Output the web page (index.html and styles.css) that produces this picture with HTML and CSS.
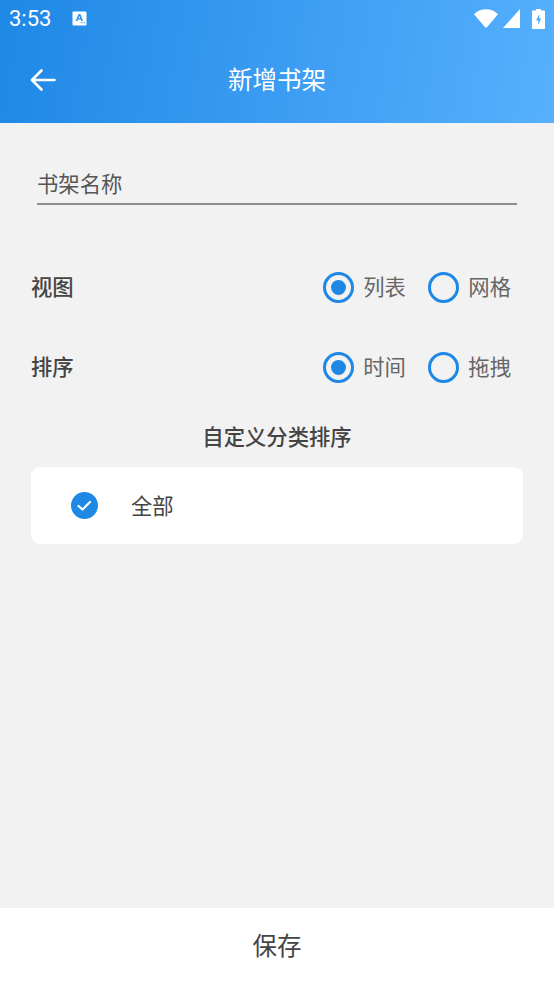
FILE: index.html
```html
<!DOCTYPE html>
<html lang="zh">
<head>
<meta charset="utf-8">
<title>新增书架</title>
<link rel="stylesheet" href="styles.css">
</head>
<body>
<div class="app">
  <header class="header">
    <div class="status">
      <span class="time">3:53</span>
      <svg class="notif" width="15" height="15" viewBox="0 0 15 15"><path fill="#fff" fill-rule="evenodd" d="M1.500 0.500h12a1 1 0 0 1 1 1v12a1 1 0 0 1-1 1h-12a1 1 0 0 1-1-1v-12a1 1 0 0 1 1-1zM6.600 3 3.800 10h1.600l.5-1.400h3l.5 1.400h1.600L8.300 3zM7.400 4.900l1 2.400H6.500zM9 11.200h.9v1H9zM10.500 11.200h.9v1h-.9zM12 11.200h.9v1H12z"/></svg>
      <div class="status-right">
        <svg width="24" height="19" viewBox="0 0 24 19"><path fill="#fff" d="M0 5.200C3.200 2.100 7.300.3 12 .3s8.800 1.800 12 4.900L13.100 18a1.500 1.500 0 0 1-2.200 0z"/></svg>
        <svg class="signal" width="17" height="19" viewBox="0 0 17 19"><path fill="#fff" d="M17 0v19H0z"/></svg>
        <svg class="batt" width="13" height="20" viewBox="0 0 13 20"><path fill="#fff" fill-rule="evenodd" d="M4 0h5v1.500h3a1 1 0 0 1 1 1V19a1 1 0 0 1-1 1H1a1 1 0 0 1-1-1V2.500a1 1 0 0 1 1-1h3zM7.300 5 4 11.500h2.200V16l3-6.500H7.300z"/></svg>
      </div>
    </div>
    <div class="toolbar">
      <svg class="back" width="26" height="24" viewBox="0 0 26 24"><path fill="none" stroke="#fff" stroke-width="2.600" stroke-linecap="round" stroke-linejoin="round" d="M24.500 12H2.500M11.500 2.500 2 12l9.500 9.500"/></svg>
      <h1 class="title">新增书架</h1>
    </div>
  </header>
  <main class="content">
    <div class="field">书架名称</div>
    <div class="row row-view">
      <span class="label">视图</span>
      <div class="options">
        <span class="option"><i class="radio on"></i><span class="opt-text">列表</span></span>
        <span class="option"><i class="radio"></i><span class="opt-text">网格</span></span>
      </div>
    </div>
    <div class="row row-sort">
      <span class="label">排序</span>
      <div class="options">
        <span class="option"><i class="radio on"></i><span class="opt-text">时间</span></span>
        <span class="option"><i class="radio"></i><span class="opt-text">拖拽</span></span>
      </div>
    </div>
    <h2 class="section">自定义分类排序</h2>
    <div class="card">
      <svg class="check" width="27" height="27" viewBox="0 0 27 27"><circle cx="13.500" cy="13.500" r="13.500" fill="#1e88e5"/><path fill="none" stroke="#fff" stroke-width="2.200" stroke-linecap="round" stroke-linejoin="round" d="M7.500 14l4 3.500 7.500-7.500"/></svg>
      <span class="card-text">全部</span>
    </div>
  </main>
  <footer class="save">保存</footer>
</div>
</body>
</html>
```

FILE: styles.css
```css
* { box-sizing: border-box; }
html, body { margin: 0; padding: 0; }
body { font-family: "Roboto", "Noto Sans CJK SC", sans-serif; background: #f2f2f2; }
.app { width: 554px; height: 984px; display: flex; flex-direction: column; overflow: hidden; }
.header { height: 123px; background: linear-gradient(100deg, #1e88e5, #56b0fe); color: #fff; flex: none; }
.status { height: 37px; display: flex; align-items: center; padding: 0 9px; }
.time { font-size: 22px; width: 63px; }
.notif { margin-top: -1px; }
.status-right { margin-left: auto; display: flex; align-items: center; gap: 5px; }
.batt { margin-left: 7px; }
.toolbar { height: 86px; display: flex; align-items: center; padding-left: 30px; position: relative; }
.toolbar .back { margin-top: -1px; }
.title { position: absolute; left: 0; right: 0; top: 28px; margin: 0; text-align: center; font-size: 24.500px; line-height: 32px; font-weight: 400; }
.content { flex: 1; padding: 0 31px; }
.field { margin: 47px 6px 0; height: 35px; border-bottom: 2px solid #8e8e8e; font-size: 21.330px; line-height: 30px; color: #555; }
.row { display: flex; align-items: center; justify-content: space-between; height: 40px; }
.row-view { margin-top: 62px; }
.row-sort { margin-top: 40px; }
.label { font-size: 21.330px; font-weight: 500; color: #444; margin-top: -3px; }
.options { display: flex; gap: 22px; padding-right: 12px; }
.option { display: flex; align-items: center; gap: 9.500px; font-size: 21.330px; color: #666; }
.opt-text { margin-top: -3px; }
.radio { width: 31px; height: 31px; border: 3px solid #1e88e5; border-radius: 50%; display: block; position: relative; }
.radio.on::after { content: ""; position: absolute; left: 5px; top: 5px; width: 15px; height: 15px; border-radius: 50%; background: #1e88e5; }
.section { margin: 36px 0 0; text-align: center; font-size: 21.330px; line-height: 30px; font-weight: 500; color: #444; }
.card { margin-top: 14px; height: 77px; background: #fff; border-radius: 9px; display: flex; align-items: center; padding-left: 40px; }
.card-text { margin-left: 33px; margin-top: -3px; font-size: 21.330px; color: #444; }
.save { flex: none; height: 76px; background: #fff; text-align: center; font-size: 24.500px; line-height: 78px; color: #444; }
```
